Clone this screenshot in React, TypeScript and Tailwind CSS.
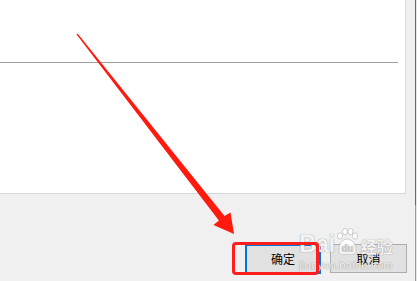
const cjk = { fontFamily: '"Microsoft YaHei", "Noto Sans CJK SC", sans-serif' };

function Arrow() {
  return (
    <svg className="pointer-events-none absolute left-0 top-0" width="417" height="281" viewBox="0 0 417 281">
      <polygon
        points="76.6,34.4 77.6,33.6 224.5,216.1 230.5,212.5 234,234 213.5,225 218.9,220.5"
        fill="#ff1a0d"
      />
    </svg>
  );
}

function Watermark() {
  return (
    <div className="pointer-events-none absolute left-[299px] top-[228px] flex flex-col items-center text-white/90 [text-shadow:0_0_1px_rgba(110,110,110,0.55),0_0_1px_rgba(110,110,110,0.55)]">
      <div className="flex h-[28px] items-end leading-none">
        <span className="text-[24px] font-bold tracking-tight" style={{ fontFamily: '"Liberation Sans", Arial, sans-serif' }}>
          Bai
        </span>
        <svg width="22" height="28" viewBox="0 0 22 28" className="mx-[1px]">
          <ellipse cx="4" cy="8" rx="2.5" ry="3.2" fill="white" fillOpacity="0.9" stroke="#b8b8b8" strokeWidth="0.7" />
          <ellipse cx="9" cy="3.6" rx="2.5" ry="3.2" fill="white" fillOpacity="0.9" stroke="#b8b8b8" strokeWidth="0.7" />
          <ellipse cx="14.5" cy="3.6" rx="2.5" ry="3.2" fill="white" fillOpacity="0.9" stroke="#b8b8b8" strokeWidth="0.7" />
          <ellipse cx="19" cy="8" rx="2.5" ry="3.2" fill="white" fillOpacity="0.9" stroke="#b8b8b8" strokeWidth="0.7" />
          <path d="M3 22 C3 15 7 11 11 11 C15 11 20 15 20 22 C20 27 15 27 11 26 C7 27 3 27 3 22 Z" fill="white" fillOpacity="0.9" stroke="#b8b8b8" strokeWidth="0.7" />
          <text x="11.5" y="24" textAnchor="middle" fontSize="10" fontWeight="bold" fill="#d8d8d8" fontFamily="Liberation Sans, Arial, sans-serif">
            du
          </text>
        </svg>
        <span className="mb-[2px] ml-[2px] text-[16px] font-bold leading-none" style={cjk}>
          经验
        </span>
      </div>
      <div className="mt-[4px] text-[11px] leading-none tracking-[0.3px]" style={{ fontFamily: '"Liberation Sans", Arial, sans-serif' }}>
        jingyan.baidu.com
      </div>
    </div>
  );
}

export default function App() {
  return (
    <div className="relative flex h-[281px] w-[417px] overflow-hidden bg-[#f0f0f0]">
      <div className="flex w-[415px] flex-col">
        <div className="flex h-[194px]">
          <div className="flex h-[194px] w-[406px] flex-col border-b border-r border-b-[#d6d6d6] border-r-[#dadada] bg-white">
            <div className="h-[62px]" />
            <div className="h-px w-[398px] bg-[#a0a0a0]" />
          </div>
          <div className="flex-1 bg-[#efefef]" />
        </div>
        <div className="flex justify-end gap-[9px] pr-[8px] pt-[50px]">
          <button
            className="flex h-[30px] w-[76px] items-center justify-center border-2 border-[#0078d7] bg-[#e1e1e1] text-[12px] text-black"
            style={cjk}
          >
            确定
          </button>
          <button
            className="flex h-[29px] w-[77px] items-center justify-center border border-[#adadad] bg-[#e1e1e1] text-[12px] text-black"
            style={cjk}
          >
            取消
          </button>
        </div>
      </div>
      <div className="flex w-px flex-col">
        <div className="h-[205px] bg-[#6b6b6b]" />
        <div className="flex-1 bg-[#9a9a9a]" />
      </div>
      <div className="w-px bg-[#e6e6e6]" />

      <Watermark />
      <div className="pointer-events-none absolute left-[232px] top-[242px] h-[33px] w-[87px] rounded-[4px] border-[3px] border-[#ff1e1e]" />
      <Arrow />
    </div>
  );
}
